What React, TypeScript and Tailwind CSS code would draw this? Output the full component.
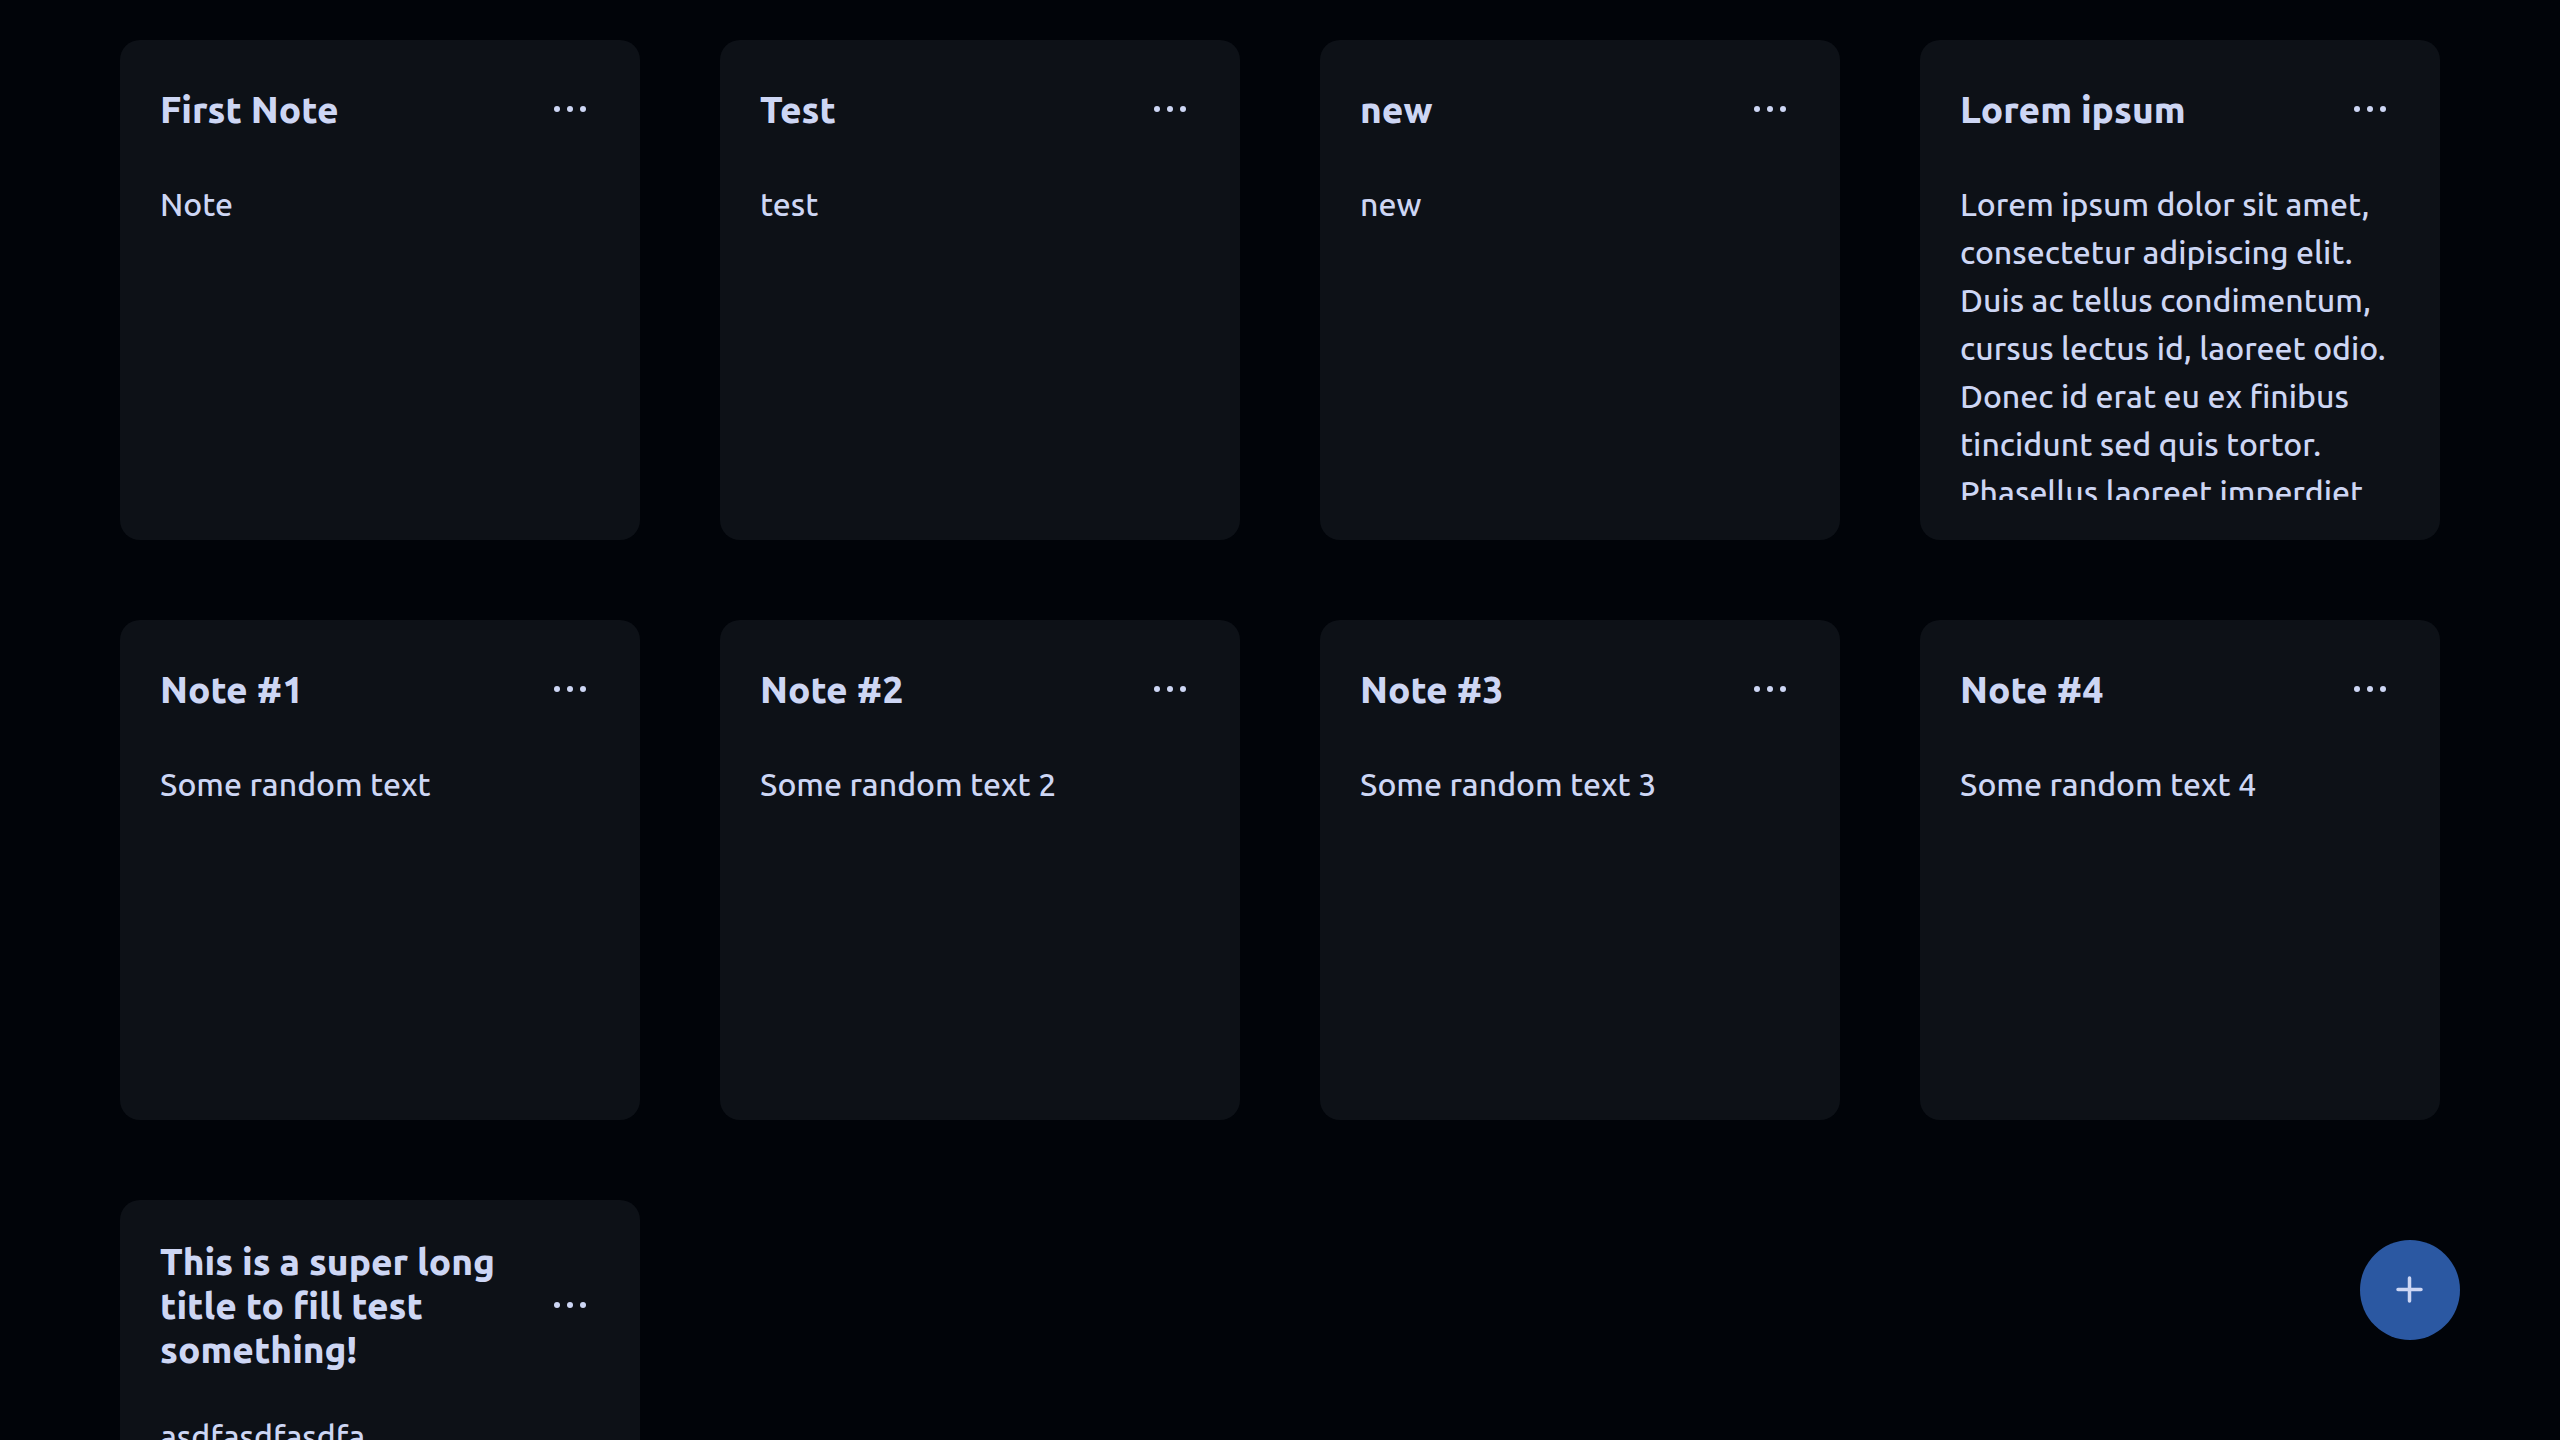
type Note = { title: string; body: string };

const notes: Note[] = [
  { title: "First Note", body: "Note" },
  { title: "Test", body: "test" },
  { title: "new", body: "new" },
  {
    title: "Lorem ipsum",
    body: "Lorem ipsum dolor sit amet, consectetur adipiscing elit. Duis ac tellus condimentum, cursus lectus id, laoreet odio. Donec id erat eu ex finibus tincidunt sed quis tortor. Phasellus laoreet imperdiet",
  },
  { title: "Note #1", body: "Some random text" },
  { title: "Note #2", body: "Some random text 2" },
  { title: "Note #3", body: "Some random text 3" },
  { title: "Note #4", body: "Some random text 4" },
  { title: "This is a super long title to fill test something!", body: "asdfasdfasdfa" },
];

function DotsIcon() {
  return (
    <svg viewBox="0 0 60 60" fill="currentColor" className="size-[60px]" aria-hidden="true">
      <circle cx="17" cy="29" r="3" />
      <circle cx="30" cy="29" r="3" />
      <circle cx="43" cy="29" r="3" />
    </svg>
  );
}

function PlusIcon() {
  return (
    <svg
      viewBox="0 0 40 40"
      fill="none"
      stroke="currentColor"
      strokeWidth="3.5"
      strokeLinecap="round"
      className="size-10"
      aria-hidden="true"
    >
      <path d="M19.5 8v23M8 19.5h23" />
    </svg>
  );
}

function NoteCard({ title, body }: Note) {
  return (
    <article className="flex h-[500px] flex-col gap-10 rounded-[20px] bg-[#0d1117] p-10">
      <header className="flex items-center justify-between">
        <h2 className="text-[37px] leading-[44px] font-extrabold">{title}</h2>
        <button type="button" aria-label={`Options for ${title}`} className="shrink-0 cursor-pointer">
          <DotsIcon />
        </button>
      </header>
      <p className="min-h-0 flex-1 overflow-hidden text-[32px] leading-[48px] font-medium">{body}</p>
    </article>
  );
}

export default function App() {
  return (
    <div className="h-screen overflow-y-auto bg-[#010409] font-['Ubuntu','Noto_Sans',sans-serif] text-[#cdd6f4] [scrollbar-width:none]">
      <main className="grid grid-cols-4 gap-20 px-[120px] py-10">
        {notes.map((note) => (
          <NoteCard key={note.title} {...note} />
        ))}
      </main>
      <button
        type="button"
        aria-label="Add note"
        className="fixed right-[100px] bottom-[100px] flex size-[100px] cursor-pointer items-center justify-center rounded-full bg-[#2b58a2]"
      >
        <PlusIcon />
      </button>
    </div>
  );
}
